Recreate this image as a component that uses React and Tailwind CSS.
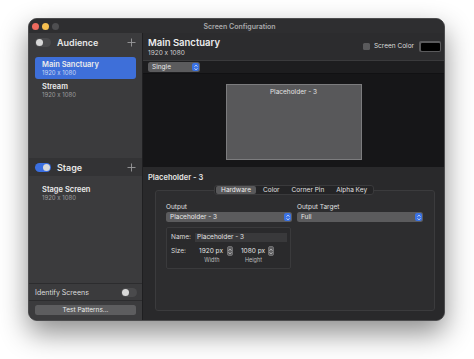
import React from 'react'

function Toggle({ on }) {
  return (
    <div className={`w-[16px] h-[9px] rounded-full flex items-center px-[1px] ${on ? 'bg-[#3b6fe0] justify-end' : 'bg-[#4a4a4c] justify-start'}`}>
      <div className="w-[7px] h-[7px] rounded-full bg-[#d8d8d8]" />
    </div>
  )
}

function PlusIcon() {
  return (
    <svg width="9" height="9" viewBox="0 0 9 9" className="shrink-0">
      <path d="M4.5 0.5v8M0.5 4.5h8" stroke="#9a9a9c" strokeWidth="0.9" />
    </svg>
  )
}

function Chevrons({ color = '#fff' }) {
  return (
    <svg width="4" height="7" viewBox="0 0 4 7">
      <path d="M0.6 2.6L2 1.2L3.4 2.6M0.6 4.4L2 5.8L3.4 4.4" stroke={color} strokeWidth="0.8" fill="none" />
    </svg>
  )
}

function Popup({ label, className }) {
  return (
    <div className={`h-[10px] rounded-[2.5px] bg-[#5b5b5d] flex items-center justify-between pl-[4px] pr-[1px] ${className}`}>
      <span className="text-[6.5px] leading-none text-[#e8e8e8]">{label}</span>
      <div className="w-[7px] h-[8px] rounded-[2px] bg-[#3a72e4] flex items-center justify-center">
        <Chevrons />
      </div>
    </div>
  )
}

function Stepper() {
  return (
    <div className="w-[6px] h-[10px] rounded-[2px] bg-[#5e5e60] border border-[#6e6e70] flex items-center justify-center">
      <Chevrons color="#e0e0e0" />
    </div>
  )
}

function ScreenItem({ name, selected }) {
  return (
    <div className={`h-[22px] mx-[6px] rounded-[3px] pl-[7px] flex flex-col justify-center ${selected ? 'bg-[#3e6fd9]' : ''}`}>
      <span className="text-[7.5px] leading-[9px] font-semibold text-[#ececec]">{name}</span>
      <span className={`text-[6px] leading-[8px] ${selected ? 'text-[#c9d7f5]' : 'text-[#9c9c9e]'}`}>1920 x 1080</span>
    </div>
  )
}

function GroupHeader({ label, on, dark }) {
  return (
    <div className={`h-[18px] flex items-center px-[6px] ${dark ? 'bg-[#333335]' : ''}`}>
      <Toggle on={on} />
      <span className="ml-[6px] text-[9px] leading-none font-semibold text-[#e6e6e6]">{label}</span>
      <div className="flex-1" />
      <PlusIcon />
    </div>
  )
}

function Sidebar() {
  return (
    <div className="w-[114px] bg-[#3b3b3d] border-r border-[#1f1f21] flex flex-col">
      <div className="h-[125px] flex flex-col">
        <GroupHeader label="Audience" on={false} />
        <div className="pt-[6px]">
          <ScreenItem name="Main Sanctuary" selected />
          <ScreenItem name="Stream" />
        </div>
      </div>
      <div className="h-[125px] flex flex-col">
        <GroupHeader label="Stage" on dark />
        <div className="pt-[6px]">
          <ScreenItem name="Stage Screen" />
        </div>
      </div>
      <div className="flex-1 flex flex-col border-t border-[#2c2c2e]">
        <div className="h-[17px] flex items-center justify-between pl-[6px] pr-[5px] border-b border-[#2c2c2e]">
          <span className="text-[7px] leading-none text-[#dcdcdc]">Identify Screens</span>
          <Toggle on={false} />
        </div>
        <div className="px-[6px] pt-[4px]">
          <div className="h-[10px] rounded-[2.5px] bg-[#5d5d5f] flex items-center justify-center">
            <span className="text-[6.5px] leading-none text-[#ececec]">Test Patterns...</span>
          </div>
        </div>
      </div>
    </div>
  )
}

function MainPane() {
  return (
    <div className="flex-1 flex flex-col bg-[#29292b]">
      <div className="h-[28px] bg-[#2c2c2e] border-b border-[#3a3a3c] flex items-center justify-between pl-[5px] pr-[3px]">
        <div className="flex flex-col pt-[1px]">
          <span className="text-[9.5px] leading-[12px] font-semibold text-[#ededed]">Main Sanctuary</span>
          <span className="text-[6.5px] leading-[9px] text-[#cfcfcf]">1920 x 1080</span>
        </div>
        <div className="flex items-center">
          <div className="w-[7px] h-[7px] rounded-[1.5px] bg-[#5a5a5c]" />
          <span className="ml-[4px] text-[6.5px] leading-none text-[#dedede]">Screen Color</span>
          <div className="ml-[5px] w-[22px] h-[11px] rounded-[2px] bg-[#5a5a5c] p-[1.5px]">
            <div className="w-full h-full bg-black rounded-[1px]" />
          </div>
        </div>
      </div>
      <div className="h-[13px] bg-[#1d1d1f] border-b border-[#111113] flex items-center pl-[5px]">
        <Popup label="Single" className="w-[52px]" />
      </div>
      <div className="h-[93px] bg-[#161618] flex justify-center pt-[10px]">
        <div className="w-[136px] h-[76px] bg-[#58585a] border border-[#7c7c7e] flex justify-center pt-[4px]">
          <span className="text-[6.5px] leading-none text-[#e4e4e4]">Placeholder - 3</span>
        </div>
      </div>
      <div className="flex-1 flex flex-col">
        <div className="pt-[7px] pl-[5px]">
          <span className="block text-[7.5px] leading-[8px] font-semibold text-[#e6e6e6]">Placeholder - 3</span>
        </div>
        <div className="relative mt-[3px] pt-[5px] pl-[12px]">
          <div className="w-[280px] h-[121px] border border-[#3b3b3d] bg-[#2d2d2f] rounded-[3px] pt-[12px] pl-[10px]">
            <div className="flex gap-[5px]">
              <div className="w-[126px] flex flex-col">
                <span className="text-[6.5px] leading-[8px] text-[#e0e0e0]">Output</span>
                <Popup label="Placeholder - 3" className="mt-[1px]" />
              </div>
              <div className="w-[126px] flex flex-col">
                <span className="text-[6.5px] leading-[8px] text-[#e0e0e0]">Output Target</span>
                <Popup label="Full" className="mt-[1px]" />
              </div>
            </div>
            <div className="mt-[5px] w-[125px] h-[42px] border border-[#3a3a3c] bg-[#2a2a2c] rounded-[2px] pl-[4px] pt-[4px]">
              <div className="flex items-center h-[10px]">
                <span className="w-[24px] text-[6.5px] leading-none text-[#dcdcdc]">Name:</span>
                <div className="w-[92px] h-[9px] bg-[#39393b] flex items-center pl-[2px]">
                  <span className="text-[6.5px] leading-none text-[#e4e4e4]">Placeholder - 3</span>
                </div>
              </div>
              <div className="flex mt-[4px]">
                <span className="w-[28px] text-[6.5px] leading-[10px] text-[#dcdcdc]">Size:</span>
                <div className="flex flex-col items-center">
                  <div className="flex items-center gap-[4px] h-[10px]">
                    <span className="text-[6.5px] leading-none text-[#e4e4e4]">1920 px</span>
                    <Stepper />
                  </div>
                  <span className="text-[5.5px] leading-[8px] text-[#bdbdbd] pr-[8px]">Width</span>
                </div>
                <div className="ml-[8px] flex flex-col items-center">
                  <div className="flex items-center gap-[3px] h-[10px]">
                    <span className="text-[6.5px] leading-none text-[#e4e4e4]">1080 px</span>
                    <Stepper />
                  </div>
                  <span className="text-[5.5px] leading-[8px] text-[#bdbdbd] pr-[8px]">Height</span>
                </div>
              </div>
            </div>
          </div>
          {/* segmented control over the group box */}
          <div className="absolute top-0 left-[71px] w-[160px] h-[10px] rounded-[3px] bg-[#242426] border border-[#3a3a3c] flex items-center px-[1px]">
            <div className="h-[8px] w-[40px] rounded-[2px] bg-[#59595b] flex items-center justify-center">
              <span className="text-[6.5px] leading-none text-[#ececec]">Hardware</span>
            </div>
            <span className="ml-[7px] text-[6.5px] leading-none text-[#e0e0e0]">Color</span>
            <span className="ml-[12px] text-[6.5px] leading-none text-[#e0e0e0]">Corner Pin</span>
            <span className="ml-[12px] text-[6.5px] leading-none text-[#e0e0e0]">Alpha Key</span>
          </div>
        </div>
      </div>
    </div>
  )
}

export default function App() {
  return (
    <div className="w-[474px] h-[359px] bg-white pt-[18px] pl-[28px] font-['Inter','Liberation_Sans',sans-serif] [font-feature-settings:'calt'_0] overflow-hidden">
      <div className="w-[417px] h-[303px] rounded-[9px] bg-[#2b2b2d] border border-[#4c4c4e] shadow-[0_12px_28px_rgba(0,0,0,0.45)] overflow-hidden flex flex-col">
        <div className="h-[14px] bg-[#2e2e30] flex items-center relative">
          <div className="flex items-center gap-[3px] pl-[3px]">
            <div className="w-[7px] h-[7px] rounded-full bg-[#ed6a5e]" />
            <div className="w-[7px] h-[7px] rounded-full bg-[#f5bf4f]" />
            <div className="w-[7px] h-[7px] rounded-full bg-[#4e4e50]" />
          </div>
          <span className="flex-1 text-center text-[7px] leading-none font-semibold text-[#a9a9ab] pr-[24px]">Screen Configuration</span>
        </div>
        <div className="flex-1 flex min-h-0">
          <Sidebar />
          <MainPane />
        </div>
      </div>
    </div>
  )
}
